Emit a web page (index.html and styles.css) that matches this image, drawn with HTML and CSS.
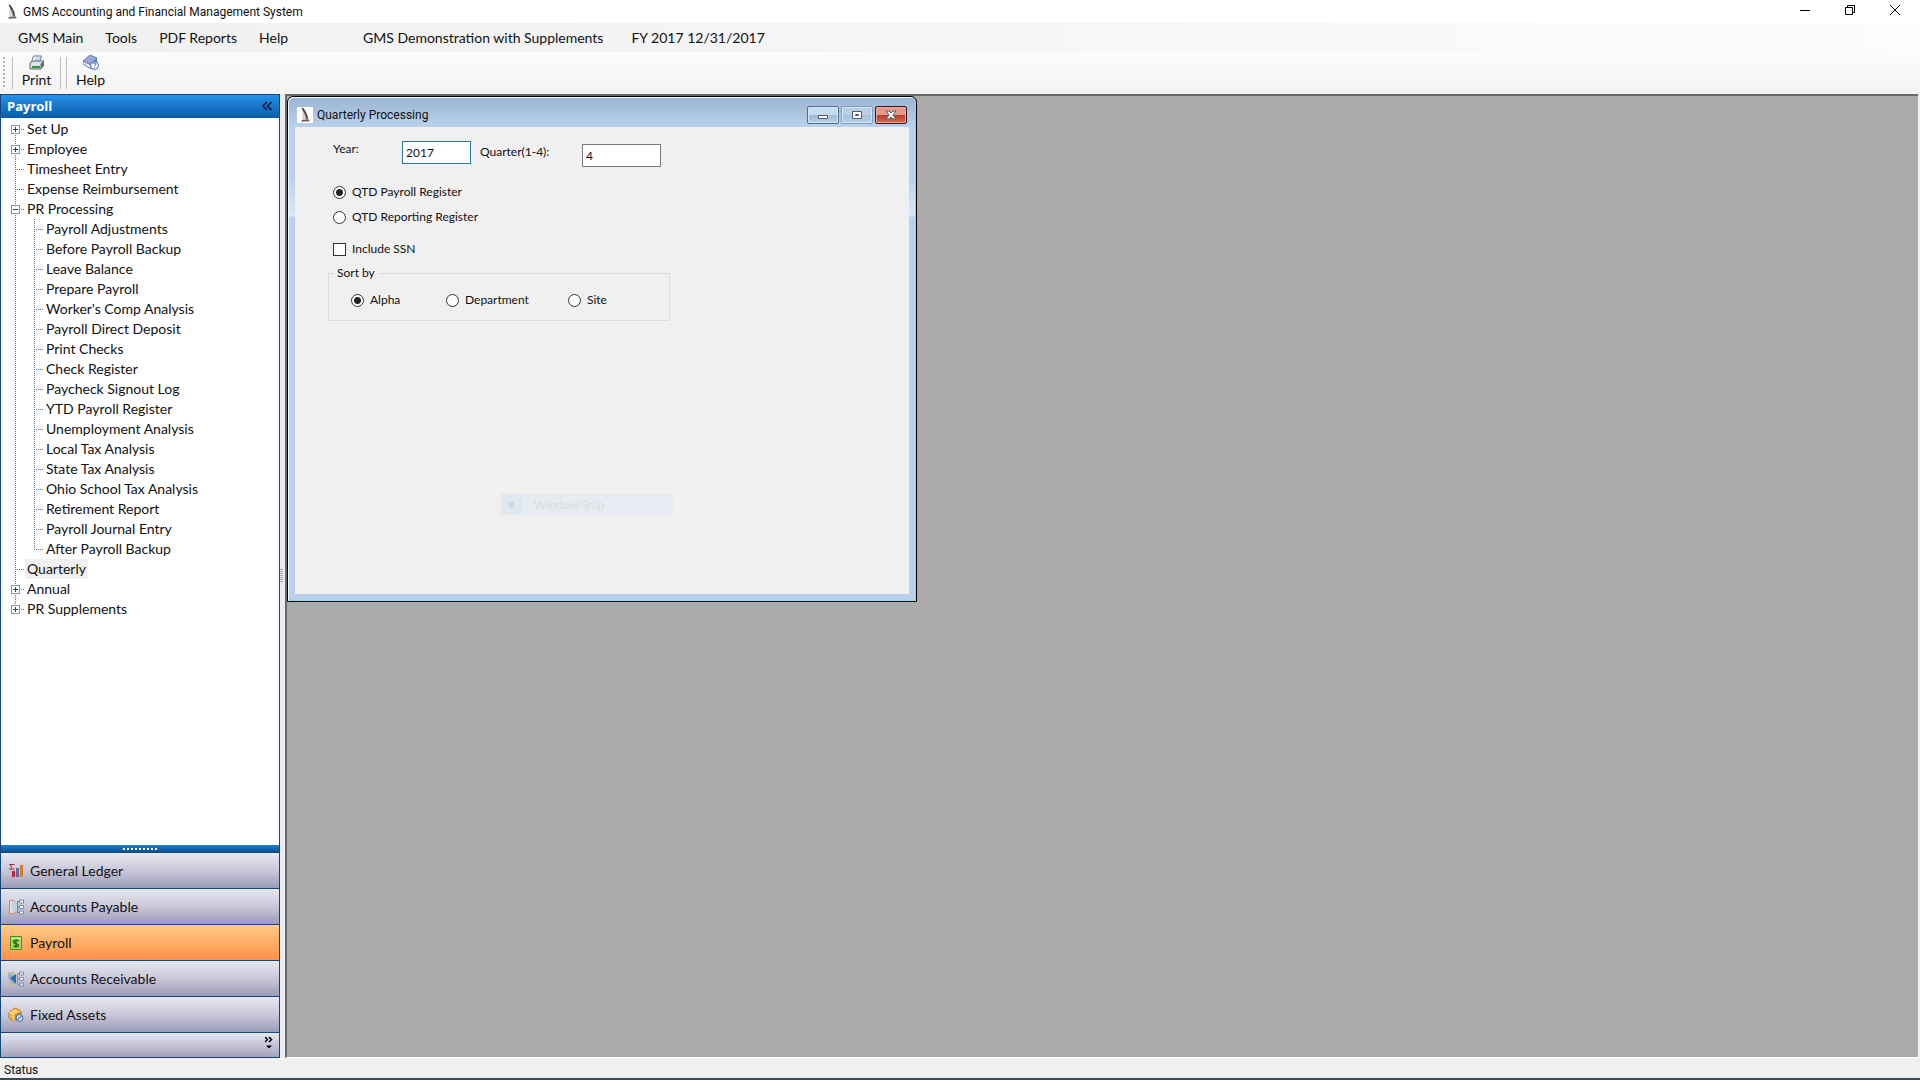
FILE: index.html
```html
<!DOCTYPE html>
<html lang="en">
<head>
    <meta charset="UTF-8">
    <meta name="viewport" content="width=device-width, initial-scale=1.0">
    <title>GMS Accounting and Financial Management System</title>
    <link rel="stylesheet" href="styles.css">
</head>
<body>

    <svg class="symbols" aria-hidden="true">
        <symbol id="penguin" viewBox="0 0 16 16">
            <path d="M4.500 0.500l2 .8 1.500 2 1 1.700 1.600 3.600.6 3.200 1.800 2-2 .7-5.500.5-1-1 1.300-1.800-.3-4.700.6-3.500z" fill="#a39c95"/>
            <path d="M4.500 0.500l2 .8 1.700 2.700 2 4 .8 4-1 .5-1.800-5L6 4z" fill="#4a4442"/>
            <path d="M6.400 4.800l1.200 2.600.9 4.600-.9 1.400-1.300-.4-.3-4z" fill="#e0dad4"/>
            <path d="M4.600 14.200l3.200-.9 4.400.6" fill="none" stroke="#5a5350"/>
        </symbol>
    </svg>

    <header class="title-bar">
        <svg class="app-icon"><use href="#penguin"/></svg>
        <h1>GMS Accounting and Financial Management System</h1>
        <div class="window-buttons">
            <button aria-label="Minimize"><svg viewBox="0 0 10 10"><path d="M0 5.5h10"/></svg></button>
            <button aria-label="Restore"><svg viewBox="0 0 10 10"><path d="M.5 2.5h7v7h-7zM2.5 2.5v-2h7v7h-2"/></svg></button>
            <button aria-label="Close"><svg viewBox="0 0 10 10"><path d="M0 0l10 10M10 0L0 10"/></svg></button>
        </div>
    </header>

    <nav class="menu-bar">
        <button>GMS Main</button>
        <button>Tools</button>
        <button>PDF Reports</button>
        <button>Help</button>
        <span class="company">GMS Demonstration with Supplements</span>
        <span class="fiscal-year">FY 2017 12/31/2017</span>
    </nav>

    <div class="toolbar">
        <span class="grip"></span>
        <span class="separator"></span>
        <button class="tool">
            <svg viewBox="0 0 16 16">
                <path d="M4.5 1h8l-2 6h-8z" fill="#fff" stroke="#54749a"/>
                <path d="M6 3h5M5.4 5h5" stroke="#8ab2d8"/>
                <path d="M1 8l3-2h11l-3 3v5H1z" fill="#dce3e6" stroke="#596775"/>
                <path d="M12 9l3-3v5l-3 3z" fill="#637078"/>
                <path d="M3 12h8" stroke="#249a35" stroke-width="2"/>
            </svg>
            Print
        </button>
        <span class="separator"></span>
        <span class="separator"></span>
        <button class="tool">
            <svg viewBox="0 0 16 16">
                <path d="M0 6l7-6 7 3-6 7z" fill="#97a7d8" stroke="#6e7eb5"/>
                <path d="M0 6v3l8 5v-4z" fill="#e8edff" stroke="#687ab6"/>
                <path d="M8 10l6-7v4l-6 7z" fill="#6175b4"/>
                <circle cx="11.5" cy="10.5" r="4" fill="#fff" stroke="#3864ad"/>
                <path d="M10 9.2c.2-2 3.1-1.7 2.9 0-.1 1-1.3 1-1.3 2M11.6 12.3v.9" fill="none" stroke="#315bad"/>
            </svg>
            Help
        </button>
    </div>

    <div class="workspace">
        <aside class="sidebar">
            <div class="sidebar-header">
                <h2>Payroll</h2>
                <button aria-label="Collapse"><svg viewBox="0 0 10 10"><path d="M5 1L1 5l4 4M9.5 1l-4 4 4 4"/></svg></button>
            </div>

            <ul class="tree">
                <li><button class="toggle" aria-label="Expand"></button><a href="#">Set Up</a></li>
                <li><button class="toggle" aria-label="Expand"></button><a href="#">Employee</a></li>
                <li><a href="#">Timesheet Entry</a></li>
                <li><a href="#">Expense Reimbursement</a></li>
                <li><button class="toggle open" aria-label="Collapse"></button><a href="#">PR Processing</a>
                    <ul>
                        <li><a href="#">Payroll Adjustments</a></li>
                        <li><a href="#">Before Payroll Backup</a></li>
                        <li><a href="#">Leave Balance</a></li>
                        <li><a href="#">Prepare Payroll</a></li>
                        <li><a href="#">Worker's Comp Analysis</a></li>
                        <li><a href="#">Payroll Direct Deposit</a></li>
                        <li><a href="#">Print Checks</a></li>
                        <li><a href="#">Check Register</a></li>
                        <li><a href="#">Paycheck Signout Log</a></li>
                        <li><a href="#">YTD Payroll Register</a></li>
                        <li><a href="#">Unemployment Analysis</a></li>
                        <li><a href="#">Local Tax Analysis</a></li>
                        <li><a href="#">State Tax Analysis</a></li>
                        <li><a href="#">Ohio School Tax Analysis</a></li>
                        <li><a href="#">Retirement Report</a></li>
                        <li><a href="#">Payroll Journal Entry</a></li>
                        <li><a href="#">After Payroll Backup</a></li>
                    </ul>
                </li>
                <li><a href="#" class="selected">Quarterly</a></li>
                <li><button class="toggle" aria-label="Expand"></button><a href="#">Annual</a></li>
                <li><button class="toggle" aria-label="Expand"></button><a href="#">PR Supplements</a></li>
            </ul>

            <div class="sidebar-splitter"><span></span></div>

            <nav class="modules">
                <button>
                    <svg viewBox="0 0 16 16">
                        <path d="M6.500 1.500H1.500L4 3.800 1.500 6h5" fill="none" stroke="#b3232d"/>
                        <path d="M4 8h3v6H4z" fill="#c22735"/>
                        <path d="M8 5h3v9H8z" fill="#5d69a0"/>
                        <path d="M12 2h3v12h-3z" fill="#d87a2b"/>
                    </svg>
                    General Ledger
                </button>
                <button>
                    <svg viewBox="0 0 16 16">
                        <path d="M1.500 1.500h4L10 8l-4 6.500H1.500z" fill="#f1d9cd" stroke="#dc8462"/>
                        <path d="M4 2l6 3v6l-5 3-1-5z" fill="#b9d5e6"/>
                        <path d="M9 2.500h3M9 8h3M9 13.500h3M9.500 2v12" stroke="#6981a5" fill="none"/>
                        <path d="M11.500 1h4v3h-4zM11.500 6.500h4v3h-4zM11.500 12h4v3h-4z" fill="#fff" stroke="#6f8bb4"/>
                    </svg>
                    Accounts Payable
                </button>
                <button class="active">
                    <svg viewBox="0 0 16 16">
                        <path d="M2.500 1.500h11v13h-11z" fill="#a9d75c" stroke="#4e8f22"/>
                        <path d="M3 3.500h10" stroke="#e1f5ae"/>
                        <path d="M10.500 6C9 4.500 5.500 5 5.500 7c0 2.200 5 1.200 5 3.300 0 1.800-3.500 2-5 .5M8 4.200v8.600" fill="none" stroke="#28711a" stroke-width="1.500"/>
                    </svg>
                    Payroll
                </button>
                <button>
                    <svg viewBox="0 0 16 16">
                        <path d="M0 1h6l3 5H3zM0 15h6l3-5H3z" fill="#cdbf97"/>
                        <path d="M0 2l8 3v6l-3 3-5-7z" fill="#8fb4d6"/>
                        <path d="M2 7l6-4v10z" fill="#2f6fac"/>
                        <path d="M12 2.500H9.500v11H12M9.500 8H12" fill="none" stroke="#858da5"/>
                        <path d="M11.500 1h4v3h-4zM11.500 6.500h4v3h-4zM11.500 12h4v3h-4z" fill="#dfe2f0" stroke="#858da5"/>
                    </svg>
                    Accounts Receivable
                </button>
                <button>
                    <svg viewBox="0 0 16 16">
                        <path d="M1 5l6-4 6 3v6l-7 4-5-3z" fill="#f2bd50" stroke="#b57a25"/>
                        <path d="M1 5l5 2 7-3M6 7v7M4 3l5 2" fill="none" stroke="#fff0aa"/>
                        <path d="M6.500 7v7L13 10V4z" fill="#c98c2f"/>
                        <circle cx="11.500" cy="11" r="3.500" fill="#d5e1f3" stroke="#456b9d"/>
                        <path d="M9.500 13l4-4" stroke="#668cc0" stroke-width="1.500"/>
                    </svg>
                    Fixed Assets
                </button>
                <div class="overflow">
                    <button aria-label="Configure buttons"><svg viewBox="0 0 8 14"><path d="M0 1l2.500 2.500L0 6M4 1l2.500 2.500L4 6" fill="none" stroke="#000" stroke-width="1.500"/><path d="M1 9.500h6l-3 3z"/></svg></button>
                </div>
            </nav>
        </aside>

        <div class="vertical-splitter"><span></span></div>

        <main class="mdi-area">
            <section class="child-window">
                <div class="child-title">
                    <svg class="child-icon"><use href="#penguin"/></svg>
                    <h2>Quarterly Processing</h2>
                    <div class="child-buttons">
                        <button aria-label="Minimize"><svg viewBox="0 0 12 10"><path d="M1.500 5.500h9v3h-9z"/></svg></button>
                        <button class="maximize" aria-label="Maximize"><svg viewBox="0 0 12 10"><path d="M1.500 1.500h9v7h-9zM4.500 4.500h3v1h-3z"/></svg></button>
                        <button class="close" aria-label="Close"><svg viewBox="0 0 12 10"><path d="M1 1h3l2 2 2-2h3L8 5l3 4H8L6 7 4 9H1l3-4z"/></svg></button>
                    </div>
                </div>
                <form class="child-body">
                    <div class="fields">
                        <div class="field year">
                            <label for="year">Year:</label>
                            <input type="text" id="year" value="2017" autofocus>
                        </div>
                        <div class="field quarter">
                            <label for="quarter">Quarter(1-4):</label>
                            <input type="text" id="quarter" value="4">
                        </div>
                    </div>
                    <div class="registers">
                        <label class="option"><input type="radio" name="register" checked>QTD Payroll Register</label>
                        <label class="option"><input type="radio" name="register">QTD Reporting Register</label>
                    </div>
                    <label class="option"><input type="checkbox" name="ssn">Include SSN</label>
                    <fieldset>
                        <legend>Sort by</legend>
                        <label class="option"><input type="radio" name="sort" checked>Alpha</label>
                        <label class="option"><input type="radio" name="sort">Department</label>
                        <label class="option"><input type="radio" name="sort">Site</label>
                    </fieldset>
                    <div class="snip-menu"><span class="snip-mark"></span>Window Snip</div>
                </form>
            </section>
        </main>
    </div>

    <footer class="status-bar">Status</footer>

    <script>
        const year = document.getElementById('year');
        year.focus();
        year.setSelectionRange(4, 4);
    </script>

</body>
</html>
```
FILE: styles.css
```css
* {
    box-sizing: border-box;
}
body {
    margin: 0;
    height: 100vh;
    display: flex;
    flex-direction: column;
    overflow: hidden;
    background-color: #f0f0f0;
    color: #111;
    font-family: Lato, sans-serif;
    font-size: 14px;
}
button, input {
    font: inherit;
    color: inherit;
}
button {
    border: none;
    padding: 0;
    background: none;
}
h1, h2 {
    margin: 0;
    font-weight: normal;
}
.symbols {
    display: none;
}

/* title bar */
.title-bar {
    display: flex;
    align-items: center;
    height: 23px;
    flex-shrink: 0;
    background-color: #fff;
}
.app-icon {
    width: 16px;
    height: 16px;
    margin: 0 3px 0 4px;
}
.title-bar h1 {
    font-family: Roboto, sans-serif;
    font-size: 12px;
}
.window-buttons {
    display: flex;
    align-self: flex-start;
    margin-left: auto;
    padding-right: 3px;
}
.window-buttons button {
    width: 45px;
    height: 20px;
    display: flex;
    align-items: center;
    justify-content: center;
}
.window-buttons svg {
    width: 10px;
    height: 10px;
    fill: none;
    stroke: #000;
}

/* menu and toolbar */
.menu-bar {
    display: flex;
    align-items: center;
    height: 29px;
    flex-shrink: 0;
    padding: 0 18px 1px;
    gap: 22px;
    background: linear-gradient(90deg, #f0f0f0, #fcfcfc);
}
.company {
    margin-left: 53px;
}
.fiscal-year {
    margin-left: 6px;
}
.toolbar {
    display: flex;
    align-items: center;
    height: 42px;
    flex-shrink: 0;
    padding-left: 3px;
    background: linear-gradient(#fcfcfc, #f3f3f3);
}
.grip {
    width: 2px;
    height: 32px;
    margin-right: 7px;
    background: repeating-linear-gradient(#b4b4b4 0 2px, transparent 2px 4px);
}
.separator {
    width: 1px;
    height: 32px;
    background-color: #bdbdbd;
}
.separator + .separator {
    margin-left: 5px;
}
.tool {
    width: 47px;
    display: flex;
    flex-direction: column;
    align-items: center;
    padding-bottom: 2px;
    line-height: 18px;
}
.tool svg {
    width: 16px;
    height: 16px;
}

/* navigation pane */
.workspace {
    display: flex;
    flex: 1;
    min-height: 0;
}
.sidebar {
    display: flex;
    flex-direction: column;
    width: 280px;
    border: 1px solid #16467a;
    background-color: #fff;
}
.sidebar-header {
    display: flex;
    align-items: center;
    justify-content: space-between;
    height: 23px;
    padding: 0 7px 2px 6px;
    background: linear-gradient(#2492ec, #0a5ba8);
}
.sidebar-header h2 {
    color: #fff;
    font-family: "Open Sans", sans-serif;
    font-size: 13px;
    font-weight: bold;
}
.sidebar-header svg {
    display: block;
    width: 10px;
    height: 10px;
    fill: none;
    stroke: #00143c;
    stroke-width: 1.5;
}
.tree, .tree ul {
    list-style: none;
    margin: 0;
    padding: 0;
}
.tree {
    flex: 1;
    padding-top: 1px;
    line-height: 20px;
}
.tree li {
    padding-left: 24px;
    background:
        repeating-linear-gradient(#5f7184 0 1px, transparent 1px 2px) 14px 0 / 1px 100% no-repeat,
        repeating-linear-gradient(90deg, #5f7184 0 1px, transparent 1px 2px) 14px 10px / 9px 1px no-repeat;
}
.tree > li:first-child {
    background-position: 14px 10px;
}
.tree li:last-child {
    background-size: 1px 10px, 9px 1px;
}
.tree li li {
    padding-left: 19px;
    background-position: 9px 0, 9px 10px;
}
.tree a {
    display: inline-block;
    padding: 0 2px;
    color: inherit;
    text-decoration: none;
    vertical-align: top;
}
.tree .selected {
    background-color: #f0f0f0;
}
.toggle {
    width: 9px;
    height: 9px;
    margin: 6px 5px 0 -14px;
    border: 1px solid #8594aa;
    background:
        linear-gradient(#29466e, #29466e) center / 5px 1px no-repeat,
        linear-gradient(#29466e, #29466e) center / 1px 5px no-repeat,
        #fff;
    vertical-align: top;
}
.toggle.open {
    background-size: 5px 1px, 0 0, auto;
}
.sidebar-splitter {
    display: flex;
    align-items: center;
    justify-content: center;
    height: 7px;
    background: linear-gradient(#1c80d6, #0a5294);
}
.sidebar-splitter span {
    width: 35px;
    height: 2px;
    background: repeating-linear-gradient(90deg, #fff 0 2px, transparent 2px 4px);
}
.modules button {
    display: flex;
    align-items: center;
    width: 100%;
    height: 36px;
    padding-left: 7px;
    gap: 6px;
    border-top: 1px solid #16467a;
    background: linear-gradient(#e8e8f2, #c9c8d9 50%, #9d9bb8);
}
.modules button.active {
    background: linear-gradient(#ffc98a, #ffae66 50%, #fd9148);
}
.modules svg {
    width: 16px;
    height: 16px;
}
.modules .overflow {
    display: flex;
    justify-content: flex-end;
    height: 25px;
    padding-right: 6px;
    border-top: 1px solid #16467a;
    background: linear-gradient(#e8e8f2, #a3a1bc);
}
.modules .overflow button {
    width: 8px;
    height: 20px;
    padding: 0;
    border: none;
    background: none;
}
.modules .overflow svg {
    width: 8px;
    height: 14px;
}
.vertical-splitter {
    display: flex;
    align-items: center;
    width: 5px;
    background-color: #e9edf3;
}
.vertical-splitter span {
    width: 3px;
    height: 14px;
    background: repeating-linear-gradient(#a0a5ad 0 1px, transparent 1px 2px);
}

/* MDI area */
.mdi-area {
    flex: 1;
    margin-right: 2px;
    border: solid #696969;
    border-width: 2px 0 0 2px;
    border-bottom: 1px solid #fff;
    background-color: #ababab;
}
.child-window {
    display: flex;
    flex-direction: column;
    width: 630px;
    height: 506px;
    padding: 0 7px 7px;
    border: 1px solid #000;
    border-radius: 6px 6px 0 0;
    background: linear-gradient(#9ab5d3, #b9d1ea 30px, #b9d1ea 80px, #dbe9f8 119px, #b9d1ea 120px);
    box-shadow: inset 1px 1px #eff7ff, inset -1px -1px #8fd6f2;
}
.child-title {
    display: flex;
    align-items: center;
    height: 30px;
    padding: 6px 2px 0;
}
.child-icon {
    width: 16px;
    height: 16px;
    margin-right: 4px;
    background-color: #fff;
}
.child-title h2 {
    font-family: Roboto, sans-serif;
    font-size: 12px;
}
.child-buttons {
    display: flex;
    gap: 2px;
    margin-left: auto;
}
.child-buttons button {
    display: flex;
    align-items: center;
    justify-content: center;
    width: 32px;
    height: 18px;
    border: 1px solid #526d8d;
    border-radius: 2px;
    background: linear-gradient(#c5dbf0 50%, #9cb9d8 50%, #b7d0e8);
    box-shadow: inset 0 0 0 1px #d5e6f6;
}
.child-buttons .maximize {
    border-color: #839dbb;
    background: linear-gradient(#b9d0e9 50%, #a6c1de 50%, #b7d0e8);
}
.child-buttons .close {
    border-color: #43131a;
    background: linear-gradient(#e29a8c 50%, #b93c26 50%, #d0705a);
    box-shadow: inset 0 0 0 1px #e9a898;
}
.child-buttons svg {
    width: 12px;
    height: 10px;
    fill: #fff;
    stroke: #535666;
}
.child-body {
    flex: 1;
    padding: 14px 38px;
    background-color: #f0f0f0;
    font-size: 12px;
}
.fields {
    display: flex;
    gap: 9px;
}
.field {
    display: flex;
    align-items: flex-start;
}
.field label {
    line-height: 16px;
}
.year label {
    width: 69px;
}
.quarter {
    padding-top: 3px;
}
.quarter label {
    width: 102px;
}
.field input {
    width: 79px;
    height: 23px;
    padding: 0 3px;
    border: 1px solid #7a7a7a;
    background-color: #fff;
}
.year input {
    width: 69px;
}
.field input:focus {
    border-color: #2a7a96;
    outline: none;
}
.registers {
    display: flex;
    flex-direction: column;
    gap: 9px;
    margin: 17px 0 16px;
}
.option {
    display: flex;
    align-items: center;
    gap: 6px;
    line-height: 16px;
}
.option input {
    appearance: none;
    width: 13px;
    height: 13px;
    margin: 0;
    border: 1px solid #333;
    background-color: #fff;
}
.option input[type="radio"] {
    border-radius: 50%;
}
.option input[type="radio"]:checked {
    background: radial-gradient(circle, #222 3px, #fff 4px);
}
fieldset {
    display: grid;
    grid-template-columns: 95px 122px auto;
    align-items: start;
    width: 342px;
    height: 56px;
    margin: 8px 0 0 -5px;
    padding: 11px 22px;
    border: 1px solid #dcdcdc;
}
legend {
    margin-left: -18px;
    padding: 0 4px;
    line-height: 16px;
}
.snip-menu {
    display: flex;
    align-items: center;
    gap: 12px;
    width: 172px;
    height: 21px;
    margin: 173px 0 0 168px;
    background-color: #e6ecf1;
    color: #dadbe2;
}
.snip-mark {
    width: 21px;
    height: 21px;
    background: radial-gradient(circle, #ced6de 2px, #e0e8f0 4px);
}

.status-bar {
    height: 22px;
    flex-shrink: 0;
    padding-left: 4px;
    border-bottom: 2px solid #3b4a54;
    font-family: Roboto, sans-serif;
    font-size: 12px;
    line-height: 24px;
}
```
